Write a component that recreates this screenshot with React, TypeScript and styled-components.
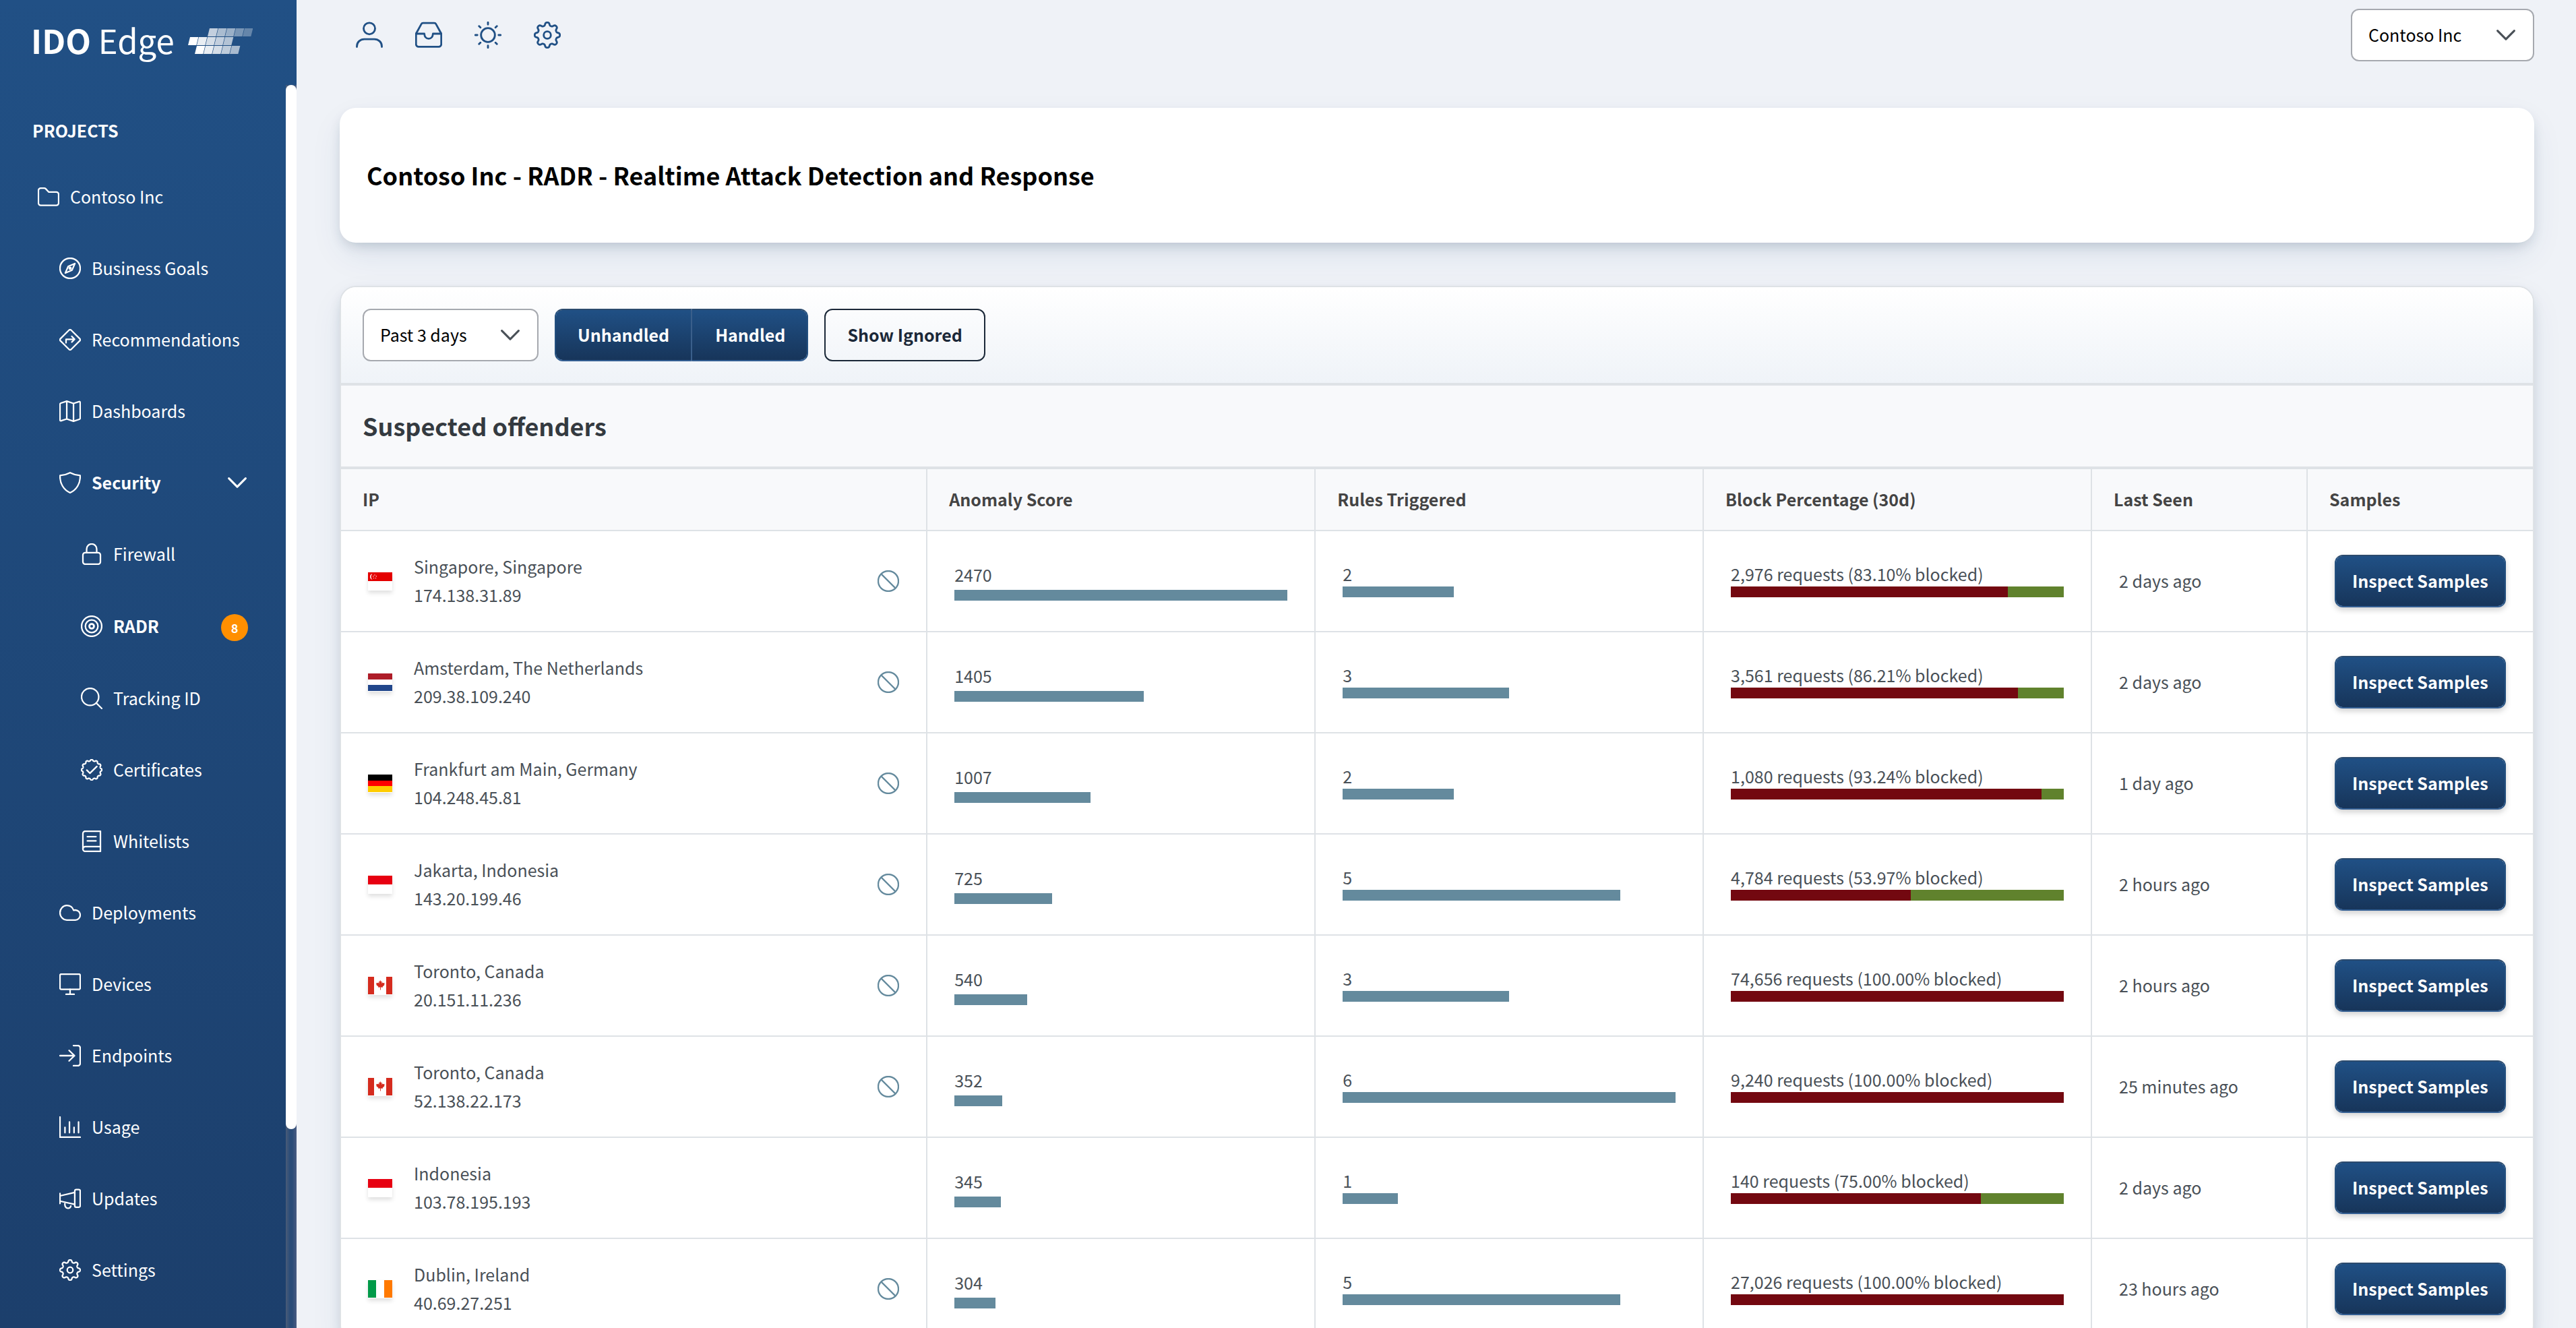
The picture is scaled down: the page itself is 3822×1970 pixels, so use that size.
import React from "react";
import styled, { createGlobalStyle, css } from "styled-components";

const line = "#dee2e6";
const navy = "#205085";

const GlobalStyle = createGlobalStyle`
  *, *::before, *::after { box-sizing: border-box; }
  body {
    margin: 0;
    background: #eff2f7;
    color: #495057;
    font-family: "Noto Sans CJK SC", sans-serif;
    font-size: 25px;
    line-height: 42px;
  }
  button, select { font: inherit; }
`;

/* ---------- icons ---------- */

const gearPath = (lobes: number, outer: number, inner: number) => {
  const points: string[] = [];
  const steps = 240;
  for (let i = 0; i < steps; i += 1) {
    const t = (i / steps) * Math.PI * 2;
    const wave = Math.tanh(1.6 * Math.cos(lobes * t)) / Math.tanh(1.6);
    const r = (outer + inner) / 2 + ((outer - inner) / 2) * wave;
    points.push(`${(12 + r * Math.sin(t)).toFixed(2)} ${(12 - r * Math.cos(t)).toFixed(2)}`);
  }
  return `M${points.join("L")}Z`;
};

const shapes = {
  folder: (
    <path d="M.75 18.9V4.9a2.6 2.6 0 0 1 2.6-2.6h4c.6 0 1 .2 1.4.6l3.4 3.7h8.5a2.6 2.6 0 0 1 2.6 2.6v9.7a2.6 2.6 0 0 1-2.6 2.6H3.35a2.6 2.6 0 0 1-2.6-2.6Z" />
  ),
  compass: (
    <>
      <circle cx="12" cy="12" r="11.25" />
      <path d="M17.3 6.7 14.2 14 6.7 17.3 9.8 10Z" />
      <circle cx="12" cy="12" r="1" />
    </>
  ),
  directions: (
    <>
      <path d="M10.8 1.3a1.7 1.7 0 0 1 2.4 0l9.5 9.5a1.7 1.7 0 0 1 0 2.4l-9.5 9.5a1.7 1.7 0 0 1-2.4 0l-9.5-9.5a1.7 1.7 0 0 1 0-2.4Z" />
      <path d="M7.5 15.4v-3.9h9M13.9 8.2l3.1 3.2-3.1 3.1" />
    </>
  ),
  map: (
    <>
      <path d="M.75 4.2c0-.6.3-1 .9-1.2L8.3.9l7.5 2.5 6-2c.8-.3 1.45.2 1.45 1v17.4c0 .6-.3 1-.9 1.2l-6.6 2.2-7.5-2.6-6.1 2c-.8.3-1.4-.2-1.4-1Z" />
      <path d="M8.3.9v19.7M15.8 3.4v19.8" />
    </>
  ),
  shield: (
    <path d="M12 .9C8.8 2.6 5 3.7.8 4.1.5 12.5 4.5 20 12 23.2 19.5 20 23.5 12.5 23.2 4.1 19 3.7 15.2 2.6 12 .9Z" />
  ),
  lock: (
    <>
      <rect x="2.25" y="10.4" width="19.5" height="12.85" rx="2.6" />
      <path d="M6.4 10.4V6.3a5.6 5.6 0 0 1 11.2 0v4.1" />
    </>
  ),
  bullseye: (
    <>
      <circle cx="12" cy="12" r="11.2" />
      <circle cx="12" cy="12" r="7" />
      <circle cx="12" cy="12" r="2.6" strokeWidth="2.1" />
    </>
  ),
  search: (
    <>
      <circle cx="10.3" cy="10.3" r="9.55" />
      <path d="m17.2 17.2 6.05 6.05" />
    </>
  ),
  verified: (
    <>
      <path d={gearPath(12, 11.3, 9.9)} />
      <path d="m6.6 12.3 3.4 3.5 7.8-7.6" />
    </>
  ),
  book: (
    <>
      <path d="M21.75.75H4.9A2.65 2.65 0 0 0 2.25 3.4v17.2a2.65 2.65 0 0 0 2.65 2.65h16.85Z" />
      <path d="M2.25 20.6a2.65 2.65 0 0 1 2.65-2.65h16.85M7.2 6.9h9.6M7.2 11.6h9.6" />
    </>
  ),
  cloud: (
    <path d="M8.3 20.1C4.1 20.1.75 16.4.75 12S4.1 3.9 8.3 3.9c3.5 0 6.5 2.2 7.6 5.4.6-.2 1.2-.3 1.9-.3 3 0 5.45 2.5 5.45 5.5s-2.4 5.6-5.4 5.6Z" />
  ),
  desktop: (
    <>
      <rect x=".75" y=".75" width="22.5" height="17" rx="1.5" />
      <path d="M12 17.75v5.5M7.5 23.25h9" />
    </>
  ),
  signIn: (
    <path d="M.75 12h16M10.9 6.2 16.9 12l-6 5.8M15.75.75h4.9a2.6 2.6 0 0 1 2.6 2.6v17.3a2.6 2.6 0 0 1-2.6 2.6h-4.9" />
  ),
  chart: <path d="M.75.75v22.5h22.5M6.3 12.2v6M11.3 6.2v12M16.4 12.2v6M21.4 6.2v12" />,
  megaphone: (
    <>
      <rect x="17.2" y="1.9" width="6.05" height="19.7" rx="1.6" />
      <path d="M.75 6.3v11.2M.75 9 17.2 5.1M.75 14.8l16.45 3.6M6.2 17.2c-.3 3.2.9 5.4 3.3 5.6 1.7.1 2.9-.9 3.3-2.4" />
    </>
  ),
  cog: (
    <>
      <path d={gearPath(8, 11.2, 8.6)} />
      <circle cx="12" cy="12" r="3.2" />
    </>
  ),
  user: (
    <>
      <circle cx="12" cy="6.2" r="5.1" />
      <path d="M.9 22.5v-.4c0-3.8 2.9-6.4 6.6-6.4h9c3.7 0 6.6 2.6 6.6 6.4v.4" />
    </>
  ),
  inbox: (
    <>
      <path d="M.75 10.8 5.5 2.2c.3-.6.8-.9 1.5-.9h10c.7 0 1.2.3 1.5.9l4.75 8.6v9.3a2.3 2.3 0 0 1-2.3 2.3H3.05a2.3 2.3 0 0 1-2.3-2.3Z" />
      <path d="M.75 10.8h7.4c.2 2.6 1.5 4.4 3.85 4.4s3.65-1.8 3.85-4.4h7.4" />
    </>
  ),
  sun: (
    <>
      <circle cx="12" cy="12" r="6.2" />
      <path d="M12 .75v1.8M12 21.45v1.8M.75 12h1.8M21.45 12h1.8M4.05 4.05 5.3 5.3M18.7 18.7l1.25 1.25M4.05 19.95 5.3 18.7M18.7 5.3l1.25-1.25" />
    </>
  ),
  ban: (
    <>
      <circle cx="12" cy="12" r="11.25" />
      <path d="m4.2 4.2 15.6 15.6" />
    </>
  ),
  chevron: <path d="M2.7 7.2 12 16.6l9.3-9.4" strokeWidth="2.3" />,
};

type IconName = keyof typeof shapes;

const IconSvg = styled.svg<{ $size: number }>`
  display: block;
  flex: none;
  width: ${(p) => p.$size}px;
  height: ${(p) => p.$size}px;
`;

const Icon = ({ name, size = 32 }: { name: IconName; size?: number }) => (
  <IconSvg
    $size={size}
    viewBox="0 0 24 24"
    fill="none"
    stroke="currentColor"
    strokeWidth="1.7"
    strokeLinecap="round"
    strokeLinejoin="round"
    aria-hidden="true"
  >
    {shapes[name]}
  </IconSvg>
);

/* ---------- sidebar ---------- */

const Shell = styled.div`
  display: grid;
  grid-template-columns: 440px minmax(0, 1fr);
  grid-template-rows: minmax(0, 1fr);
  height: 100vh;
  overflow: hidden;
`;

const Sidebar = styled.aside`
  display: flex;
  flex-direction: column;
  min-height: 0;
  background: linear-gradient(180deg, #215085 0%, #1c3f6c 100%);
  color: #fff;
`;

const Brand = styled.a`
  display: flex;
  align-items: baseline;
  flex: none;
  gap: 20px;
  height: 126px;
  padding: 29px 0 0 46px;
  color: inherit;
  font-size: 49px;
  line-height: 60px;
  text-decoration: none;
`;

const BrandMark = styled.svg`
  display: block;
  width: 96px;
  height: 38px;
`;

const SidebarBody = styled.div`
  display: grid;
  grid-template-columns: minmax(0, 1fr) 16px;
  grid-template-rows: minmax(0, 1fr);
  flex: 1;
  min-height: 0;
`;

const Nav = styled.nav`
  min-height: 0;
  overflow: hidden;
`;

const NavHeading = styled.h2`
  margin: 0;
  padding: 46px 48px 25px;
  font-size: 25px;
  line-height: 42px;
  text-transform: uppercase;
`;

const NavList = styled.ul`
  margin: 0;
  padding: 0;
  list-style: none;
`;

const NavLink = styled.a<{ $level: number; $strong?: boolean }>`
  display: flex;
  align-items: center;
  gap: 16px;
  min-height: 106px;
  padding: 32px 56px 32px ${(p) => 24 + p.$level * 32}px;
  color: inherit;
  font-weight: ${(p) => (p.$strong ? 700 : 400)};
  line-height: 40px;
  text-decoration: none;
`;

const NavText = styled.span`
  flex: 1;
  padding-bottom: 2px;
`;

const Badge = styled.span`
  width: 40px;
  height: 40px;
  margin-top: 4px;
  border-radius: 50%;
  background: #ff8f00;
  font-size: 18px;
  line-height: 40px;
  text-align: center;
`;

const ScrollTrack = styled.div`
  background: linear-gradient(90deg, #4a5c78 0%, #2a4c78 40%, #2a4c78 60%, #4a5c82 100%);
`;

const ScrollThumb = styled.div`
  height: 84%;
  border-radius: 8px;
  background: #fff;
`;

interface NavEntry {
  label: string;
  icon: IconName;
  level: number;
  strong?: boolean;
  open?: boolean;
  badge?: number;
}

const navEntries: NavEntry[] = [
  { label: "Contoso Inc", icon: "folder", level: 1 },
  { label: "Business Goals", icon: "compass", level: 2 },
  { label: "Recommendations", icon: "directions", level: 2 },
  { label: "Dashboards", icon: "map", level: 2 },
  { label: "Security", icon: "shield", level: 2, strong: true, open: true },
  { label: "Firewall", icon: "lock", level: 3 },
  { label: "RADR", icon: "bullseye", level: 3, strong: true, badge: 8 },
  { label: "Tracking ID", icon: "search", level: 3 },
  { label: "Certificates", icon: "verified", level: 3 },
  { label: "Whitelists", icon: "book", level: 3 },
  { label: "Deployments", icon: "cloud", level: 2 },
  { label: "Devices", icon: "desktop", level: 2 },
  { label: "Endpoints", icon: "signIn", level: 2 },
  { label: "Usage", icon: "chart", level: 2 },
  { label: "Updates", icon: "megaphone", level: 2 },
  { label: "Settings", icon: "cog", level: 2 },
];

const brandRows = [
  { x: 29, y: 0, tones: [0.73, 0.62, 0.55, 0.4, 0.31] },
  { x: 0, y: 13, tones: [1, 0.9, 0.81, 0.73, 0.66] },
  { x: 10, y: 26, tones: [1, 0.9, 0.81, 0.71, 0.61] },
];

const Logo = () => (
  <BrandMark viewBox="0 0 96 38" fill="#fff" aria-hidden="true">
    {brandRows.map((row) =>
      row.tones.map((tone, i) => {
        const x = row.x + i * 13;
        return (
          <path
            key={`${row.y}-${i}`}
            opacity={tone}
            d={`M${x} ${row.y + 12}l3-12h12.3l-3 12Z`}
          />
        );
      })
    )}
  </BrandMark>
);

/* ---------- page ---------- */

const Main = styled.main`
  min-width: 0;
  min-height: 0;
  padding: 0 62px 0 64px;
`;

const TopBar = styled.header`
  display: flex;
  align-items: center;
  justify-content: space-between;
  height: 104px;
  padding-left: 24px;
`;

const TopActions = styled.div`
  display: flex;
  gap: 48px;
`;

const IconButton = styled.button<{ $tone?: string }>`
  padding: 0;
  border: 0;
  background: none;
  color: ${(p) => p.$tone ?? navy};
  cursor: pointer;
`;

const SelectBox = styled.span<{ $width: number }>`
  display: grid;
  grid-template-columns: 1fr 32px;
  align-items: center;
  width: ${(p) => p.$width}px;
  padding-right: 24px;
  border: 2px solid #a6a9af;
  border-radius: 12px;
  background: #fff;
  color: #495057;

  svg {
    grid-area: 1 / 2;
    pointer-events: none;
  }
`;

const SelectField = styled.select`
  grid-area: 1 / 1 / 2 / 3;
  height: 74px;
  margin-right: -24px;
  padding: 0 0 2px 24px;
  border: 0;
  border-radius: 10px;
  outline: 0;
  appearance: none;
  background: transparent;
  color: #000;
`;

const Select = ({ label, value, width }: { label: string; value: string; width: number }) => (
  <SelectBox $width={width}>
    <SelectField aria-label={label} defaultValue={value}>
      <option>{value}</option>
    </SelectField>
    <Icon name="chevron" />
  </SelectBox>
);

const cardShadow = css`
  box-shadow: 0 20px 50px -6px rgba(30, 70, 130, 0.1), 0 8px 20px -6px rgba(20, 50, 70, 0.22);
`;

const TitleCard = styled.section`
  margin-top: 56px;
  padding: 71px 40px 73px;
  border-radius: 24px;
  background: #fff;
  ${cardShadow}
`;

const Title = styled.h1`
  margin: 0;
  color: #000;
  font-size: 36px;
  line-height: 56px;
`;

const DataCard = styled.section`
  margin-top: 64px;
  border: 2px solid ${line};
  border-radius: 24px;
  background: #fff;
  overflow: hidden;
  ${cardShadow}
`;

const Toolbar = styled.div`
  display: flex;
  gap: 24px;
  padding: 32px;
  border-bottom: 4px solid ${line};
  background: linear-gradient(180deg, #fff 0%, #eff3f8 100%);
`;

const buttonBase = css`
  height: 78px;
  font-weight: 700;
  white-space: nowrap;
  cursor: pointer;
`;

const solid = css`
  border: 2px solid;
  border-color: #2b4a6d #24507f #345f93 #24507f;
  background: linear-gradient(180deg, #205085 0%, #17355a 100%) padding-box #205085;
  color: #fff;
`;

const ButtonGroup = styled.div`
  display: flex;
`;

const GroupButton = styled.button`
  ${buttonBase}
  ${solid}
  padding: 0 32px 2px;

  &:first-child {
    border-right-color: #3a5f8b;
    border-radius: 12px 0 0 12px;
  }

  &:last-child {
    border-left: 0;
    padding-left: 34px;
    border-radius: 0 12px 12px 0;
  }
`;

const OutlineButton = styled.button`
  ${buttonBase}
  padding: 0 32px 2px;
  border: 2px solid #1b2838;
  border-radius: 12px;
  background: transparent;
  color: #1b2838;
`;

const InspectButton = styled.button`
  ${buttonBase}
  ${solid}
  display: block;
  padding: 0 24px 2px;
  border-radius: 12px;
  box-shadow: 0 4px 8px rgba(0, 0, 0, 0.18);
`;

const SectionTitle = styled.h2`
  margin: 0;
  padding: 31px 32px 33px;
  border-bottom: 4px solid ${line};
  background: #f8f9fb;
  color: #343a40;
  font-size: 36px;
  line-height: 56px;
`;

const Table = styled.table`
  width: 100%;
  table-layout: fixed;
  border-collapse: separate;
  border-spacing: 0;
`;

const Col = styled.col<{ $width?: string }>`
  width: ${(p) => p.$width ?? "auto"};
`;

const HeadCell = styled.th`
  height: 92px;
  padding: 0 32px 2px;
  border-right: 2px solid ${line};
  border-bottom: 2px solid ${line};
  background: #f8f9fb;
  color: #444;
  text-align: left;

  &:last-child {
    border-right: 0;
  }
`;

const Cell = styled.td`
  height: 150px;
  padding: 0 40px;
  border-right: 2px solid ${line};
  border-bottom: 2px solid ${line};
  vertical-align: middle;

  &:last-child {
    border-right: 0;
  }
`;

const Origin = styled.div`
  display: flex;
  align-items: center;
  gap: 32px;
`;

const Address = styled.div`
  flex: 1;
  padding-bottom: 2px;
`;

const Seen = styled.div`
  padding-bottom: 2px;
`;

const FlagSvg = styled.svg`
  display: block;
  flex: none;
  width: 36px;
  height: 27px;
  box-shadow: 0 4px 6px rgba(0, 0, 0, 0.12);
`;

const Meter = styled.div<{ $tight?: boolean }>`
  display: grid;
  gap: ${(p) => (p.$tight ? 2 : 4)}px;
  padding-bottom: ${(p) => (p.$tight ? 4 : 0)}px;
  line-height: ${(p) => (p.$tight ? 34 : 38)}px;
`;

const MeterBar = styled.div<{ $track?: string; $fill: string }>`
  height: 16px;
  background: ${(p) => p.$track ?? "transparent"};

  > div {
    height: 100%;
    background: ${(p) => p.$fill};
  }
`;

type Country = "sg" | "nl" | "de" | "id" | "ca" | "ie";

const flags: Record<Country, React.ReactNode> = {
  sg: (
    <>
      <rect width="36" height="13" fill="#e40000" />
      <path d="M6.5 2.2a4.4 4.4 0 0 0 0 8.6 5.6 5.6 0 0 1 0-8.6Z" fill="#fff" />
      <g fill="#fff">
        <circle cx="10" cy="4" r=".7" />
        <circle cx="7.8" cy="5.8" r=".7" />
        <circle cx="12.3" cy="5.8" r=".7" />
        <circle cx="8.6" cy="8.6" r=".7" />
        <circle cx="11.5" cy="8.6" r=".7" />
      </g>
    </>
  ),
  nl: (
    <>
      <rect width="36" height="9" fill="#ae1c28" />
      <rect y="17" width="36" height="9" fill="#21468b" />
    </>
  ),
  de: (
    <>
      <rect width="36" height="9" fill="#000" />
      <rect y="9" width="36" height="8" fill="#f00" />
      <rect y="17" width="36" height="9" fill="#fc0" />
    </>
  ),
  id: <rect width="36" height="13" fill="#e70011" />,
  ca: (
    <>
      <rect width="9" height="26" fill="#d52b1e" />
      <rect x="27" width="9" height="26" fill="#d52b1e" />
      <path
        transform="translate(4.7 2.6) scale(.74)"
        d="m18 3 1.7 3.2 1.9-.9-.8 4.6 2.3-2.2.5 1.4 3.4-.3-.9 2.8 1 .7-4.2 4.2.4 1.4-4-.5V23h-1.2v-5.6l-4 .5.4-1.4-4.6-4.2 1-.7-.9-2.8 3.4.3.5-1.4 2.3 2.2-.8-4.6 1.9.9Z"
        fill="#d52b1e"
      />
    </>
  ),
  ie: (
    <>
      <rect width="12" height="26" fill="#009a49" />
      <rect x="24" width="12" height="26" fill="#ff7900" />
    </>
  ),
};

const Flag = ({ country }: { country: Country }) => (
  <FlagSvg viewBox="0 0 36 27" aria-hidden="true">
    <rect width="36" height="27" fill="#fff" />
    {flags[country]}
  </FlagSvg>
);

interface Offender {
  country: Country;
  place: string;
  ip: string;
  bannable: boolean;
  score: number;
  rules: number;
  requests: string;
  blocked: number;
  seen: string;
}

const offenders: Offender[] = [
  { country: "sg", place: "Singapore, Singapore", ip: "174.138.31.89", bannable: true, score: 2470, rules: 2, requests: "2,976", blocked: 83.1, seen: "2 days ago" },
  { country: "nl", place: "Amsterdam, The Netherlands", ip: "209.38.109.240", bannable: true, score: 1405, rules: 3, requests: "3,561", blocked: 86.21, seen: "2 days ago" },
  { country: "de", place: "Frankfurt am Main, Germany", ip: "104.248.45.81", bannable: true, score: 1007, rules: 2, requests: "1,080", blocked: 93.24, seen: "1 day ago" },
  { country: "id", place: "Jakarta, Indonesia", ip: "143.20.199.46", bannable: true, score: 725, rules: 5, requests: "4,784", blocked: 53.97, seen: "2 hours ago" },
  { country: "ca", place: "Toronto, Canada", ip: "20.151.11.236", bannable: true, score: 540, rules: 3, requests: "74,656", blocked: 100, seen: "2 hours ago" },
  { country: "ca", place: "Toronto, Canada", ip: "52.138.22.173", bannable: true, score: 352, rules: 6, requests: "9,240", blocked: 100, seen: "25 minutes ago" },
  { country: "id", place: "Indonesia", ip: "103.78.195.193", bannable: false, score: 345, rules: 1, requests: "140", blocked: 75, seen: "2 days ago" },
  { country: "ie", place: "Dublin, Ireland", ip: "40.69.27.251", bannable: true, score: 304, rules: 5, requests: "27,026", blocked: 100, seen: "23 hours ago" },
];

const maxScore = Math.max(...offenders.map((o) => o.score));
const maxRules = Math.max(...offenders.map((o) => o.rules));

const steel = "#648a9d";

const OffenderRow = ({ item }: { item: Offender }) => (
  <tr>
    <Cell>
      <Origin>
        <Flag country={item.country} />
        <Address>
          <div>{item.place}</div>
          <div>{item.ip}</div>
        </Address>
        {item.bannable && (
          <IconButton $tone={steel} aria-label={`Block ${item.ip}`}>
            <Icon name="ban" />
          </IconButton>
        )}
      </Origin>
    </Cell>
    <Cell>
      <Meter>
        {item.score}
        <MeterBar $fill={steel}>
          <div style={{ width: `${(item.score / maxScore) * 100}%` }} />
        </MeterBar>
      </Meter>
    </Cell>
    <Cell>
      <Meter $tight>
        {item.rules}
        <MeterBar $fill={steel}>
          <div style={{ width: `${(item.rules / maxRules) * 100}%` }} />
        </MeterBar>
      </Meter>
    </Cell>
    <Cell>
      <Meter $tight>
        {`${item.requests} requests (${item.blocked.toFixed(2)}% blocked)`}
        <MeterBar $fill="#730810" $track="#60822d">
          <div style={{ width: `${item.blocked}%` }} />
        </MeterBar>
      </Meter>
    </Cell>
    <Cell>
      <Seen>{item.seen}</Seen>
    </Cell>
    <Cell>
      <InspectButton>Inspect Samples</InspectButton>
    </Cell>
  </tr>
);

const headings = ["IP", "Anomaly Score", "Rules Triggered", "Block Percentage (30d)", "Last Seen", "Samples"];

export default function App() {
  return (
    <>
      <GlobalStyle />
      <Shell>
        <Sidebar>
          <Brand href="#">
            <span>
              <b>IDO</b> Edge
            </span>
            <Logo />
          </Brand>
          <SidebarBody>
            <Nav aria-label="Projects">
              <NavHeading>Projects</NavHeading>
              <NavList>
                {navEntries.map((entry) => (
                  <li key={entry.label}>
                    <NavLink href="#" $level={entry.level} $strong={entry.strong}>
                      <Icon name={entry.icon} />
                      <NavText>{entry.label}</NavText>
                      {entry.open && <Icon name="chevron" />}
                      {entry.badge && <Badge>{entry.badge}</Badge>}
                    </NavLink>
                  </li>
                ))}
              </NavList>
            </Nav>
            <ScrollTrack>
              <ScrollThumb />
            </ScrollTrack>
          </SidebarBody>
        </Sidebar>
        <Main>
          <TopBar>
            <TopActions>
              <IconButton aria-label="Account"><Icon name="user" size={40} /></IconButton>
              <IconButton aria-label="Inbox"><Icon name="inbox" size={40} /></IconButton>
              <IconButton aria-label="Theme"><Icon name="sun" size={40} /></IconButton>
              <IconButton aria-label="Settings"><Icon name="cog" size={40} /></IconButton>
            </TopActions>
            <Select label="Organisation" value="Contoso Inc" width={272} />
          </TopBar>
          <TitleCard>
            <Title>Contoso Inc - RADR - Realtime Attack Detection and Response</Title>
          </TitleCard>
          <DataCard>
            <Toolbar>
              <Select label="Period" value="Past 3 days" width={261} />
              <ButtonGroup>
                <GroupButton>Unhandled</GroupButton>
                <GroupButton>Handled</GroupButton>
              </ButtonGroup>
              <OutlineButton>Show Ignored</OutlineButton>
            </Toolbar>
            <SectionTitle>Suspected offenders</SectionTitle>
            <Table>
              <colgroup>
                <Col />
                <Col $width="17.71%" />
                <Col $width="17.71%" />
                <Col $width="17.71%" />
                <Col $width="320px" />
                <Col $width="334px" />
              </colgroup>
              <thead>
                <tr>
                  {headings.map((heading) => (
                    <HeadCell key={heading} scope="col">{heading}</HeadCell>
                  ))}
                </tr>
              </thead>
              <tbody>
                {offenders.map((item) => (
                  <OffenderRow key={item.ip} item={item} />
                ))}
              </tbody>
            </Table>
          </DataCard>
        </Main>
      </Shell>
    </>
  );
}
